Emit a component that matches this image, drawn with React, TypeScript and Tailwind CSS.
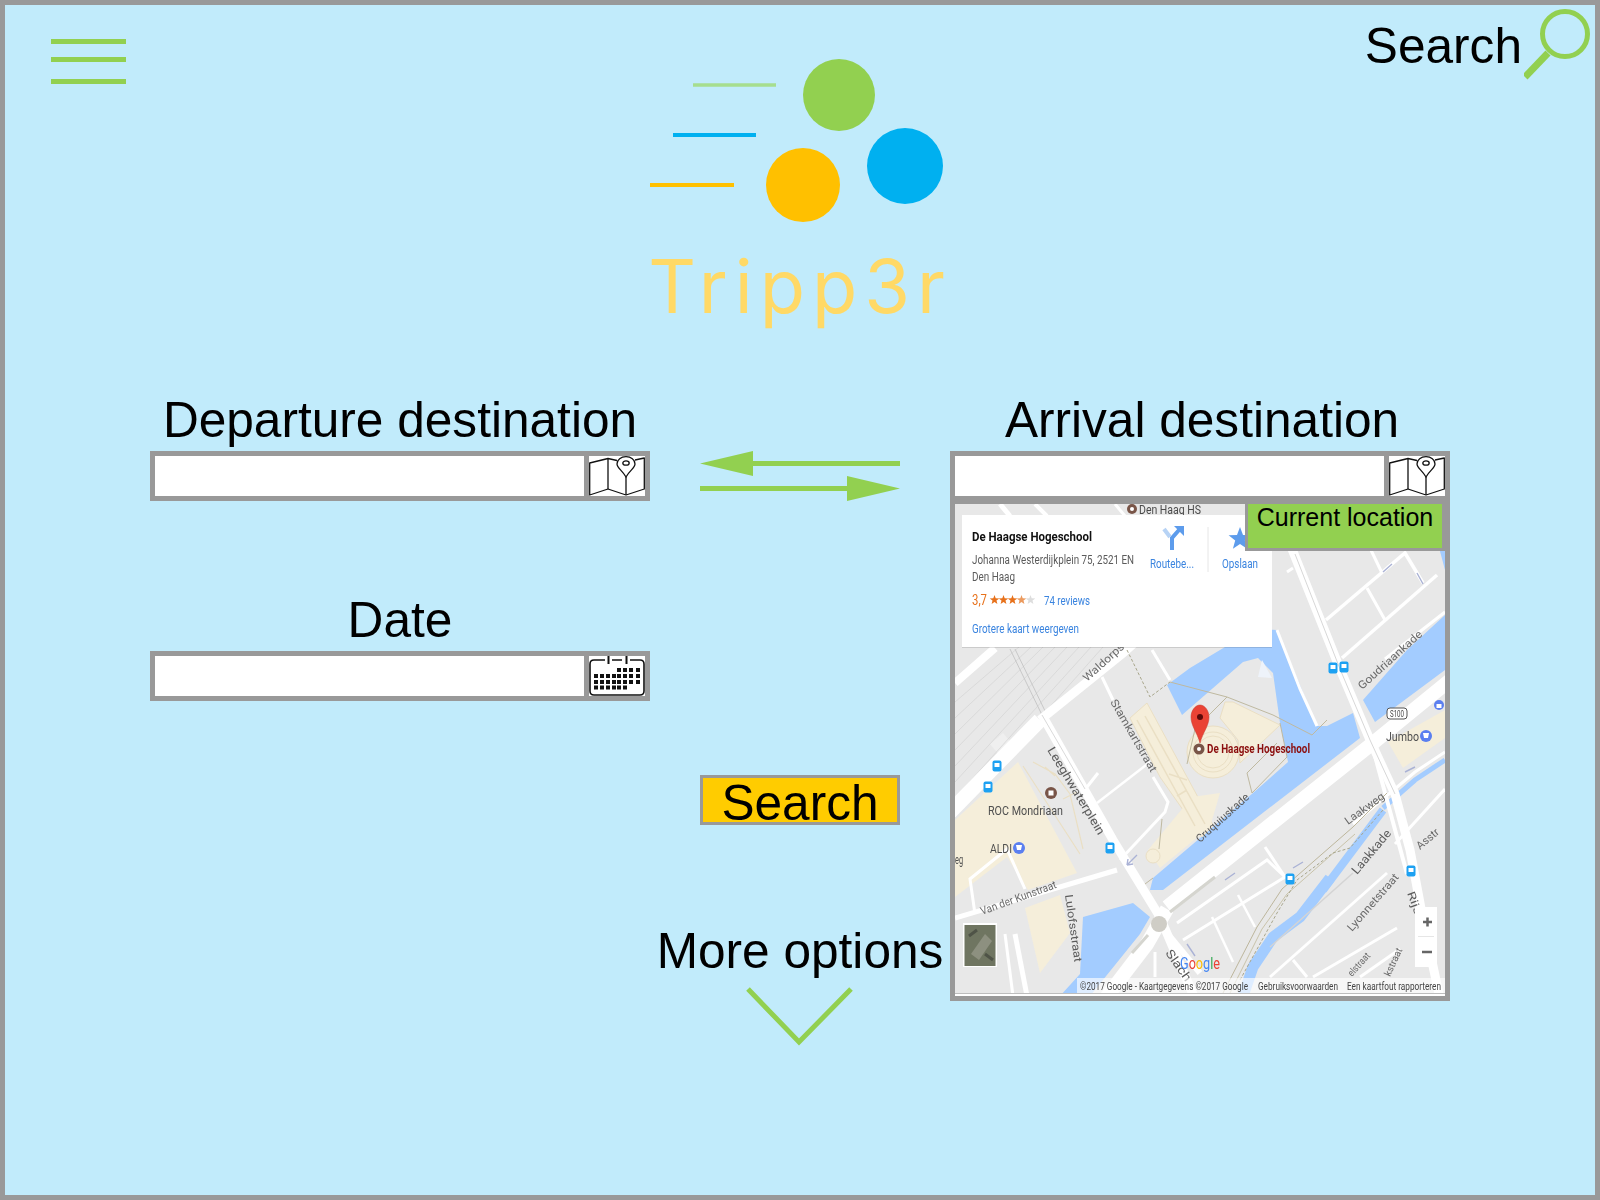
import React from "react";

const FONT = "font-['Liberation_Sans',Arial,sans-serif]";

const Label = ({ children, className = "" }: { children: React.ReactNode; className?: string }) => (
  <div className={`h-[56px] mb-[3px] text-center text-[49.6px] leading-[56px] text-black whitespace-nowrap ${className}`}>{children}</div>
);

const MapPinIcon = () => (
  <svg width="56" height="40" viewBox="0 0 56 40" fill="none" stroke="#111" strokeWidth="1.3">
    <path d="M28 4.500 L19 2.500 L0.700 7 V39 L19 33 L37 39 L55.300 33 V2 L46 4" strokeLinejoin="round" />
    <path d="M19 2.500 V33 M37 21 V39" />
    <path d="M37 21 C33 14 28 12 28 8 C28 3.500 32 0.700 37 0.700 C42 0.700 46 3.500 46 8 C46 12 41 14 37 21 Z" fill="#fff" />
    <ellipse cx="37" cy="7" rx="3.200" ry="2.200" />
  </svg>
);

const calendarDots: [number, number][] = [
  ...[28, 34, 40, 47].map((x) => [x, 12] as [number, number]),
  ...[5, 11, 17, 23, 28, 34, 40, 47].map((x) => [x, 18] as [number, number]),
  ...[5, 11, 17, 23, 28, 34, 40, 47].map((x) => [x, 24] as [number, number]),
  ...[5, 11, 17, 23, 28, 34].map((x) => [x, 29.5] as [number, number]),
];

const CalendarIcon = () => (
  <svg width="56" height="40" viewBox="0 0 56 40" fill="none">
    <path d="M16 4 H5 Q1 4 1 8 V35 Q1 39 5 39 H51 Q55 39 55 35 V8 Q55 4 51 4 H41 M23 4 H33" stroke="#111" strokeWidth="1.600" />
    <path d="M19.500 0 V8 M37.500 0 V8" stroke="#111" strokeWidth="2" />
    {calendarDots.map(([x, y], i) => (
      <rect key={i} x={x} y={y} width="4" height="4" fill="#111" />
    ))}
  </svg>
);

const InputRow = ({ icon }: { icon: React.ReactNode }) => (
  <div className="h-[50px] w-[500px] border-[5px] border-[#999999] bg-[#999999] flex gap-[5px]">
    <input className="flex-1 min-w-0 bg-white outline-none" />
    <div className="w-[56px] h-[40px] bg-white">{icon}</div>
  </div>
);

type Lbl = { t: string; x: number; y: number; w: number; a?: number; s?: number; c?: string; b?: boolean };

const MapText = ({ t, x, y, w, a = 0, s = 12, c = "#5f5f5f", b }: Lbl) => (
  <text
    x={x}
    y={y}
    fontSize={s}
    fill={c}
    fontWeight={b ? 700 : 400}
    textLength={w}
    lengthAdjust="spacingAndGlyphs"
    transform={a ? `rotate(${a} ${x} ${y})` : undefined}
  >
    {t}
  </text>
);

const roads: [string, number][] = [
  ["M0 179 L40 144", 8],
  ["M-5 308 L85 216", 15],
  ["M85 216 L168 149 L185 134", 9],
  ["M87 211 L158 336 L205 413 L240 495", 9],
  ["M212 403 L418 239 L500 172", 14],
  ["M150 495 L192 440 L212 405", 14],
  ["M335 40 L385 165 L415 236 L440 290 L455 346 L468 415 L485 495", 9],
  ["M417 241 L442 333 L452 370", 4],
  ["M322 126 L345 185 L362 222", 3],
  ["M371 116 L450 49 L468 79", 3.500],
  ["M387 154 L482 71", 3.500],
  ["M412 84 L430 116", 3],
  ["M415 44 L427 69", 3],
  ["M332 68 L338 64", 3],
  ["M490 108 L430 155", 3],
  ["M372 218 L405 192 L452 146", 0],
  ["M0 414 L162 366", 5],
  ["M20 410 L15 375 L52 345 L70 385", 3],
  ["M147 173 L158 196", 3],
  ["M197 146 L215 176", 3],
  ["M132 283 L143 269", 3],
  ["M142 299 L195 258", 2.500],
  ["M165 274 L198 273", 0],
  ["M198 273 L213 298 L210 308 L165 356", 3],
  ["M222 419 L312 356 L330 373 L228 436", 3],
  ["M310 343 L330 373", 3],
  ["M257 413 L278 458", 2.500],
  ["M283 391 L300 423", 2.500],
  ["M315 473 L432 369", 3],
  ["M338 456 L352 473", 3],
  ["M358 473 L442 424", 3],
  ["M405 473 L445 445", 3],
  ["M398 320 L460 268 L490 248", 3],
  ["M440 340 L490 285", 3],
  ["M60 430 L72 492", 5],
  ["M50 430 L58 492", 3],
  ["M212 429 L245 469", 6],
  ["M200 448 L200 473", 3],
  ["M45 0 L55 12", 5],
  ["M80 0 L92 12", 4],
  ["M160 0 L170 12", 3],
  ["M470 322 L475 345", 0],
];

const transit: [number, number][] = [
  [378, 164], [389, 163], [42, 262], [33, 283], [155, 344], [335, 375], [456, 367],
];

const starPath = (cx: number, cy: number, r: number) => {
  const pts: string[] = [];
  for (let i = 0; i < 10; i++) {
    const rad = i % 2 === 0 ? r : r * 0.42;
    const ang = -Math.PI / 2 + (i * Math.PI) / 5;
    pts.push(`${(cx + rad * Math.cos(ang)).toFixed(1)},${(cy + rad * Math.sin(ang)).toFixed(1)}`);
  }
  return `M${pts.join(" L")} Z`;
};

const labels: Lbl[] = [
  { t: "Den Haag HS", x: 184, y: 9.500, w: 62, s: 12, c: "#4a4a4a" },
  { t: "Waldorps", x: 132, y: 178, w: 51, a: -42, s: 11, c: "#6a6a6a" },
  { t: "Stamkartstraat", x: 155, y: 198, w: 82, a: 60, s: 11, c: "#6a6a6a" },
  { t: "Leeghwaterplein", x: 92, y: 246, w: 100, a: 59, s: 12, c: "#5a5a5a" },
  { t: "Cruquiuskade", x: 245, y: 339, w: 67, a: -42, s: 11, c: "#5a5a5a" },
  { t: "Laakweg", x: 393, y: 321, w: 46, a: -36, s: 11, c: "#6a6a6a" },
  { t: "Laakkade", x: 402, y: 371, w: 54, a: -50, c: "#5a5a5a" },
  { t: "Lyonnetstraat", x: 397, y: 428, w: 72, a: -49, s: 11, c: "#6a6a6a" },
  { t: "Asstr", x: 465, y: 346, w: 26, a: -40, s: 11, c: "#6a6a6a" },
  { t: "Rijs", x: 452, y: 389, w: 24, a: 70, s: 11, c: "#5a5a5a" },
  { t: "Lulofsstraat", x: 110, y: 391, w: 68, a: 82, s: 11, c: "#5a5a5a" },
  { t: "Van der Kunstraat", x: 27, y: 411, w: 80, a: -20, s: 11, c: "#6a6a6a" },
  { t: "Slach", x: 210, y: 449, w: 36, a: 55, s: 12, c: "#5a5a5a" },
  { t: "Goudriaankade", x: 407, y: 186, w: 82, a: -42, s: 11, c: "#6a6a6a" },
  { t: "kstraat", x: 435, y: 473, w: 30, a: -65, s: 10, c: "#6a6a6a" },
  { t: "elstraat", x: 397, y: 473, w: 28, a: -48, s: 10, c: "#6a6a6a" },
  { t: "ROC Mondriaan", x: 33, y: 311, w: 75, s: 13, c: "#4f4f4f" },
  { t: "ALDI", x: 35, y: 349, w: 22, s: 13, c: "#4f4f4f" },
  { t: "eg", x: 0, y: 360, w: 8, s: 13, c: "#4f4f4f" },
  { t: "Jumbo", x: 431, y: 237, w: 33, s: 13, c: "#4f4f4f" },
];

const MapView = () => (
  <svg width="490" height="492" viewBox="0 0 490 492" className="block blur-[0.5px] font-['Roboto',sans-serif]">
    <rect width="490" height="492" fill="#e8e8e8" />
    {/* water */}
    <path
      d="M195 386 L198 374 L298 289 L333 258 L325 219 L318 169 L303 154 L288 158 L227 211 L212 181 L235 164 L300 125 L322 126 L362 222 L372 222 L398 209 L405 234 L208 386 Z"
      fill="#a3ccff"
    />
    <path d="M303 173 L307 156 L317 174 Z" fill="#eef3fa" />
    <path d="M408 196 L452 146 L490 111 L490 166 L420 218 Z" fill="#a3ccff" />
    <path d="M482 36 L490 36 L490 66 Z" fill="#a3ccff" />
    <path d="M128 413 L178 399 L195 413 L185 430 L135 492 L105 492 L125 470 Z" fill="#a3ccff" />
    <path d="M368 386 L428 306" stroke="#a3ccff" strokeWidth="8" fill="none" />
    <path d="M375 374 L345 413 L318 433 L298 463 L288 492" stroke="#a3ccff" strokeWidth="11" fill="none" />
    <path d="M428 304 L460 276 L490 256" stroke="#a3ccff" strokeWidth="5" fill="none" />
    {/* plots */}
    <path d="M0 316 L63 258 L122 369 L73 386 L52 353 L0 393 Z" fill="#f5eeda" />
    <path d="M70 404 L105 391 L115 429 L85 469 Z" fill="#f5eeda" />
    <path d="M433 238 L490 206 L490 234 L448 264 Z" fill="#f5eeda" />
    <path d="M175 214 L192 199 L258 321 L247 333 L205 273 Z" fill="#f5eeda" stroke="#eadfc4" />
    <path d="M237 293 L265 289 L255 323 L205 364 L193 346 Z" fill="#f5eeda" />
    <path d="M270 198 L278 198 L325 221 L285 259 L283 236 L265 214 Z" fill="#f5eeda" stroke="#eadfc4" />
    <circle cx="258" cy="248" r="26" fill="#f5eeda" stroke="#eadfc4" />
    <circle cx="258" cy="248" r="20" fill="none" stroke="#eadfc4" />
    <circle cx="258" cy="248" r="16" fill="none" stroke="#eadfc4" />
    <circle cx="198" cy="352" r="7" fill="#f5eeda" stroke="#eadfc4" />
    <path d="M190 212 L250 320 M182 216 L240 322 M214 270 L232 276 M222 292 L232 286" stroke="#eadfc4" strokeWidth="1.500" fill="none" />
    <path d="M68 262 L125 350 M78 258 L100 270 L115 290 L128 345 M90 263 L100 272 M108 295 L122 288" stroke="#eadfc4" strokeWidth="1.200" fill="none" />
    <rect x="35" y="240" width="17" height="17" fill="#efefef" transform="rotate(-40 35 240)" />
    {/* rail yard */}
    {[0, 8, 16, 24, 32, 40, 48, 56].map((d) => (
      <path key={d} d={`M0 ${198 + d * 2} L${64 + d * 1.500} ${143}`} stroke="#d6d6d6" strokeWidth="0.800" />
    ))}
    <path d="M55 145 L87 211 L130 285 M60 145 L92 211" stroke="#c4c4c4" strokeWidth="0.900" fill="none" />
    {/* roads */}
    {roads.filter(([, w]) => w > 0).map(([d, w], i) => (
      <path key={i} d={d} stroke="#ffffff" strokeWidth={w} fill="none" />
    ))}
    <path d="M87 211 L130 285" stroke="#cfcfcf" strokeWidth="0.800" />
    <path d="M340 50 L385 165 L415 236 L440 290" stroke="#d2d2d2" strokeWidth="0.900" fill="none" />
    <path d="M215 178 L272 193 L318 211 L357 231 L372 216" stroke="#bfb9a0" strokeWidth="1" fill="none" />
    <path d="M325 219 L332 253 L297 289 L292 269 L322 239" stroke="#bfb9a0" strokeWidth="1" fill="none" />
    <path d="M272 193 L240 225 L232 260 M207 315 L204 345 M198 374 L190 380" stroke="#bfb9a0" strokeWidth="1" fill="none" />
    <path d="M172 146 L195 193 L215 178" stroke="#a8a68c" strokeWidth="1" strokeDasharray="3 2" fill="none" />
    <path d="M268 489 L302 423 L327 385 L398 323 L432 289" stroke="#bdb69c" strokeWidth="1" fill="none" />
    <path d="M275 489 L307 425 L332 390 L400 330" stroke="#c9c3aa" strokeWidth="1" fill="none" />
    <path d="M285 476 L322 409 L342 376 L378 349 L395 344 L428 306" stroke="#a8a68c" strokeWidth="1" strokeDasharray="3 2" fill="none" />
    <path d="M315 443 L398 369" stroke="#d4d4d4" strokeWidth="1.500" />
    <path d="M215 408 L260 373 M177 449 L193 431" stroke="#d5d5cf" strokeWidth="3" />
    <circle cx="204" cy="420" r="8" fill="#cfcdc6" />
    {/* small arrows */}
    <path d="M182 351 L172 361 M172 361 L173 355 M172 361 L178 360 M280 369 L270 376 M348 358 L338 364 M460 263 L450 268 M232 440 L240 452 M428 68 L437 60 M462 69 L468 80" stroke="#aab2d5" strokeWidth="1.400" fill="none" />

    {labels.map((l, i) => (
      <MapText key={i} {...l} />
    ))}

    {/* poi markers */}
    <circle cx="177" cy="5" r="5" fill="#795548" />
    <circle cx="177" cy="5" r="2" fill="#fff" />
    <circle cx="96" cy="289" r="6" fill="#795548" />
    <rect x="93.500" y="286.500" width="5" height="5" fill="#fff" />
    <circle cx="64" cy="344" r="6" fill="#5b7ff0" />
    <path d="M61 341 H67 L66 346 H62 Z" fill="#fff" />
    <circle cx="471" cy="232" r="6" fill="#5b7ff0" />
    <path d="M468 229 H474 L473 234 H469 Z" fill="#fff" />
    <circle cx="484" cy="201" r="5" fill="#5b7ff0" />
    <rect x="481.500" y="200" width="5" height="4" fill="#fff" />
    {transit.map(([x, y], i) => (
      <g key={i}>
        <rect x={x - 4.500} y={y - 5.500} width="9" height="11" rx="2" fill="#1da1f2" />
        <rect x={x - 2.500} y={y - 3} width="5" height="4" fill="#fff" />
      </g>
    ))}
    <rect x="432" y="204" width="20" height="11" rx="3" fill="#fff" stroke="#555" />
    <text x="435" y="213" fontSize="8.500" fill="#444" textLength="14" lengthAdjust="spacingAndGlyphs">S100</text>

    {/* red pin */}
    <circle cx="244" cy="245" r="5.500" fill="#795548" />
    <circle cx="244" cy="245" r="2" fill="#fff" />
    <path d="M245 239 C242 228 236 222 236 213 C236 207 240 201 245 201 C250 201 254 207 254 213 C254 222 248 228 245 239 Z" fill="#ea4335" stroke="#c5392c" strokeWidth="0.500" />
    <circle cx="245" cy="213" r="3" fill="#5a0a0a" />
    <MapText t="De Haagse Hogeschool" x={252} y={249} w={103} s={12} c="#8b0e0e" b />

    {/* info card */}
    <rect x="7" y="12" width="310" height="132" fill="#000" opacity="0.120" />
    <rect x="7" y="11" width="310" height="132" fill="#fff" />
    <MapText t="De Haagse Hogeschool" x={17} y={37} w={120} s={13} c="#111" b />
    <MapText t="Johanna Westerdijkplein 75, 2521 EN" x={17} y={60} w={162} s={12} c="#5b5b5b" />
    <MapText t="Den Haag" x={17} y={77} w={43} s={12} c="#5b5b5b" />
    <MapText t="3,7" x={17} y={101} w={15} s={14} c="#e7711b" />
    {[0, 1, 2, 3, 4].map((i) => (
      <path key={i} d={starPath(39.500 + i * 9, 96, 5)} fill={i < 3 ? "#e7711b" : i === 3 ? "#eb9a5e" : "#dddddd"} />
    ))}
    <MapText t="74 reviews" x={89} y={101} w={46} s={13} c="#3a84df" />
    <MapText t="Grotere kaart weergeven" x={17} y={129} w={107} s={13} c="#3a84df" />
    <path d="M217 46 V34 L224 26" stroke="#5d9cec" strokeWidth="4" fill="none" />
    <path d="M219 22 H229 V32 Z" fill="#5d9cec" />
    <path d="M215 33 L209 25" stroke="#b7d3f5" strokeWidth="4" />
    <MapText t="Routebe..." x={195} y={64} w={44} s={13} c="#3a84df" />
    <path d="M253 23 V68" stroke="#e6e6e6" />
    <path d={starPath(285, 35, 12)} fill="#5d9cec" />
    <MapText t="Opslaan" x={267} y={64} w={36} s={13} c="#3a84df" />

    {/* controls */}
    <rect x="8" y="419" width="34" height="44" fill="#fff" />
    <rect x="9.500" y="421" width="31" height="41" fill="#6f7561" />
    <path d="M16 450 L30 430 L37 437 L24 456 Z" fill="#8d9080" />
    <path d="M14 432 L22 426 M30 450 L38 456" stroke="#4f5347" strokeWidth="3" />
    <rect x="460" y="403" width="22" height="60" fill="#fff" />
    <path d="M468 418 H477 M472.500 413.500 V422.500" stroke="#666" strokeWidth="2.500" />
    <path d="M467 448 H477" stroke="#666" strokeWidth="2.500" />
    <path d="M463 432.500 H479" stroke="#e6e6e6" />

    <text x="225" y="465" fontSize="16" textLength="40" lengthAdjust="spacingAndGlyphs">
      <tspan fill="#4285f4">G</tspan>
      <tspan fill="#ea4335">o</tspan>
      <tspan fill="#fbbc05">o</tspan>
      <tspan fill="#4285f4">g</tspan>
      <tspan fill="#34a853">l</tspan>
      <tspan fill="#ea4335">e</tspan>
    </text>

    {/* footer */}
    <rect x="122" y="474" width="368" height="15" fill="#ffffff" opacity="0.650" />
    <MapText t="©2017 Google - Kaartgegevens ©2017 Google" x={125} y={486} w={168} s={10} c="#444" />
    <MapText t="Gebruiksvoorwaarden" x={303} y={486} w={80} s={10} c="#444" />
    <MapText t="Een kaartfout rapporteren" x={392} y={486} w={94} s={10} c="#444" />
    <rect x="0" y="489" width="490" height="1" fill="#bdbdbd" />
    <rect x="0" y="490" width="490" height="2" fill="#fff" />
  </svg>
);

export default function App() {
  return (
    <div className={`w-[1600px] h-[1200px] border-[5px] border-[#999999] bg-[#c1ebfb] overflow-hidden ${FONT}`}>
      {/* header */}
      <div className="h-[387px] grid grid-cols-[1fr_300px_1fr]">
        <div className="pl-[46px] pt-[34px]">
          <div className="w-[75px] h-[5px] bg-[#92d050]" />
          <div className="w-[75px] h-[5px] bg-[#92d050] mt-[13px]" />
          <div className="w-[75px] h-[5px] bg-[#92d050] mt-[17px]" />
        </div>

        <div className="flex flex-col items-center pt-[50px]">
          <svg width="300" height="175" viewBox="650 55 300 175" className="blur-[0.4px]">
            <path d="M693 85 H776" stroke="#a6de8f" strokeWidth="3.500" />
            <path d="M673 135 H756" stroke="#00b0f0" strokeWidth="4" />
            <path d="M650 185 H734" stroke="#ffc000" strokeWidth="4" />
            <circle cx="839" cy="95" r="36" fill="#92d050" />
            <circle cx="905" cy="166" r="38" fill="#00b0f0" />
            <circle cx="803" cy="185" r="37" fill="#ffc000" />
          </svg>
          <div className="mt-[13px] text-[74px] leading-[86px] tracking-[7px] text-[#ffd966] blur-[0.5px] font-['Inter',sans-serif] font-normal whitespace-nowrap">
            Tripp3r
          </div>
        </div>

        <div className="flex justify-end items-start pt-[4px] pr-[3px]">
          <div className="text-[49.6px] leading-[56px] mt-[9px] mr-[2px] text-black">Search</div>
          <svg width="68" height="72" viewBox="0 0 68 72" fill="none" stroke="#92d050">
            <circle cx="41" cy="25" r="22.500" strokeWidth="5" />
            <path d="M24 44 L1 68" strokeWidth="7" />
          </svg>
        </div>
      </div>

      {/* form area */}
      <div className="pl-[145px] flex gap-[50px]">
        <div className="w-[500px]">
          <Label>Departure destination</Label>
          <InputRow icon={<MapPinIcon />} />
          <div className="mt-[91px]">
            <Label>Date</Label>
            <InputRow icon={<CalendarIcon />} />
          </div>
        </div>

        <div className="w-[200px] flex flex-col items-center">
          <svg width="200" height="50" viewBox="0 0 200 50" fill="#92d050" className="mt-[59px]">
            <path d="M0 12.500 L53 0 V10 H200 V15 H53 V25 Z" />
            <path d="M0 35 H147 V25 L200 37.500 L147 50 V40 H0 Z" />
          </svg>
          <button className="mt-[274px] w-[200px] h-[50px] border-[3px] border-[#999999] bg-[#ffcc00] text-[49.6px] leading-[44px] pt-[3px] text-black">
            Search
          </button>
          <div className="mt-[98px] text-[49.6px] leading-[56px] text-black whitespace-nowrap">More options</div>
          <svg width="110" height="60" viewBox="0 0 110 60" fill="none" stroke="#92d050" strokeWidth="5" className="mt-[7px]">
            <path d="M3 3 L54 56 L106 3" />
          </svg>
        </div>

        <div className="w-[500px]">
          <Label className="pl-[4px]">Arrival destination</Label>
          <InputRow icon={<MapPinIcon />} />
          <div className="relative border-x-[5px] border-t-[3px] border-b-[5px] border-[#999999] h-[500px] bg-[#999999]">
            <MapView />
            <div className="absolute top-0 right-0 w-[200px] h-[47px] border-[3px] border-t-0 border-[#999999] bg-[#92d050] text-[25px] leading-[26px] text-center text-black">
              Current location
            </div>
          </div>
        </div>
      </div>
    </div>
  );
}
